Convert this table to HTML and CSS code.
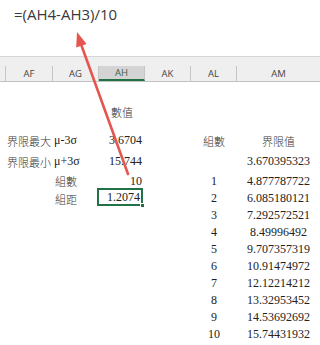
FILE: index.html
```html
<!DOCTYPE html>
<html>
<head>
<meta charset="utf-8">
<link rel="stylesheet" href="styles.css">
</head>
<body>
<div class="page">
  <div class="formula">=(AH4-AH3)/10</div>
  <div class="colhdr">
    <div class="hc"></div>
    <div class="hc">AF</div>
    <div class="hc">AG</div>
    <div class="hc sel-col">AH</div>
    <div class="hc">AK</div>
    <div class="hc">AL</div>
    <div class="hc last">AM</div>
  </div>
  <div class="sheet">
    <div class="row h22 first">
      <div></div><div></div><div></div>
      <div class="c cjk center">數值</div>
      <div></div><div></div><div></div>
    </div>
    <div class="row h21 gap">
      <div></div>
      <div class="c cjk right">界限最大</div>
      <div class="c num left">μ-3σ</div>
      <div class="c num right">3.6704</div>
      <div></div>
      <div class="c cjk center">組數</div>
      <div class="c cjk center">界限值</div>
    </div>
    <div class="row h21">
      <div></div>
      <div class="c cjk right">界限最小</div>
      <div class="c num left">μ+3σ</div>
      <div class="c num right">15.744</div>
      <div></div>
      <div></div>
      <div class="c num center">3.670395323</div>
    </div>
    <div class="row h18">
      <div></div><div></div>
      <div class="c cjk left">組數</div>
      <div class="c num right">10</div>
      <div></div>
      <div class="c num center">1</div>
      <div class="c num center">4.877787722</div>
    </div>
    <div class="row h17">
      <div></div><div></div>
      <div class="c cjk left">組距</div>
      <div class="c num right active">1.2074<span class="handle"></span></div>
      <div></div>
      <div class="c num center">2</div>
      <div class="c num center">6.085180121</div>
    </div>
    <div class="row h17"><div></div><div></div><div></div><div></div><div></div><div class="c num center">3</div><div class="c num center">7.292572521</div></div>
    <div class="row h17"><div></div><div></div><div></div><div></div><div></div><div class="c num center">4</div><div class="c num center">8.49996492</div></div>
    <div class="row h17"><div></div><div></div><div></div><div></div><div></div><div class="c num center">5</div><div class="c num center">9.707357319</div></div>
    <div class="row h17"><div></div><div></div><div></div><div></div><div></div><div class="c num center">6</div><div class="c num center">10.91474972</div></div>
    <div class="row h17"><div></div><div></div><div></div><div></div><div></div><div class="c num center">7</div><div class="c num center">12.12214212</div></div>
    <div class="row h17"><div></div><div></div><div></div><div></div><div></div><div class="c num center">8</div><div class="c num center">13.32953452</div></div>
    <div class="row h17"><div></div><div></div><div></div><div></div><div></div><div class="c num center">9</div><div class="c num center">14.53692692</div></div>
    <div class="row h17"><div></div><div></div><div></div><div></div><div></div><div class="c num center">10</div><div class="c num center">15.74431932</div></div>
  </div>
  <svg class="arrow" width="320" height="345" viewBox="0 0 320 345">
    <line x1="128" y1="174" x2="81.4" y2="45.2" stroke="#e5564f" stroke-width="2.6" stroke-linecap="round"/>
    <polygon points="77,32 86.6,44 76.2,47.6" fill="#e5564f"/>
  </svg>
</div>
</body>
</html>
```

FILE: styles.css
```css
* { box-sizing: border-box; }
html, body { margin: 0; padding: 0; background: #ffffff; }
.page {
  position: relative;
  width: 320px;
  height: 345px;
  overflow: hidden;
  font-family: "Liberation Serif", "Noto Sans CJK TC", serif;
  color: #222;
}
.formula {
  height: 56px;
  padding: 3px 0 0 14px;
  font-family: "Open Sans", "Noto Sans", sans-serif;
  font-size: 15px;
  line-height: 22px;
  color: #3a3a3a;
}
.colhdr {
  height: 26px;
  border-top: 1px solid #d6d6d6;
  border-bottom: 1px solid #c2c2c2;
  background: #efefef;
  display: grid;
  grid-template-columns: 6px 47px 46px 46px 46px 46px 1fr;
  align-items: end;
}
.hc {
  height: 15px;
  border-right: 1px solid #c6c6c6;
  font-family: "Open Sans", "Noto Sans", sans-serif;
  font-size: 9.5px;
  line-height: 15px;
  text-align: center;
  color: #444;
}
.hc.last { border-right: none; }
.hc.sel-col {
  background: #d4d4d4;
  border-bottom: 2px solid #217346;
  line-height: 13px;
  color: #3e5f4b;
}
.sheet { display: flex; flex-direction: column; }
.row {
  display: grid;
  grid-template-columns: 6px 47px 46px 46px 46px 46px 1fr;
  align-items: center;
}
.row.first { margin-top: 19px; }
.row.gap { margin-top: 7px; }
.h22 { height: 22px; }
.h21 { height: 21px; }
.h18 { height: 18px; }
.h17 { height: 17px; }
.c { white-space: nowrap; }
.cjk {
  font-family: "Noto Sans CJK TC", sans-serif;
  font-size: 11px;
  font-weight: 300;
  color: #333;
}
.num { font-size: 12px; }
.center { text-align: center; }
.right { text-align: right; padding-right: 2px; }
.left { text-align: left; padding-left: 1px; }
.c.num.right { padding-right: 3px; }
.c.cjk.left { padding-left: 2px; }
.active {
  position: relative;
  height: 18px;
  margin-left: -2px;
  margin-right: 2px;
  margin-top: -4px;
  border: 2px solid #217346;
  line-height: 14px;
  padding-right: 1px !important;
}
.handle {
  position: absolute;
  right: -4px;
  bottom: -4px;
  width: 5px;
  height: 5px;
  background: #217346;
  border: 1px solid #ffffff;
}
.arrow {
  position: absolute;
  left: 0;
  top: 0;
  pointer-events: none;
}
```
